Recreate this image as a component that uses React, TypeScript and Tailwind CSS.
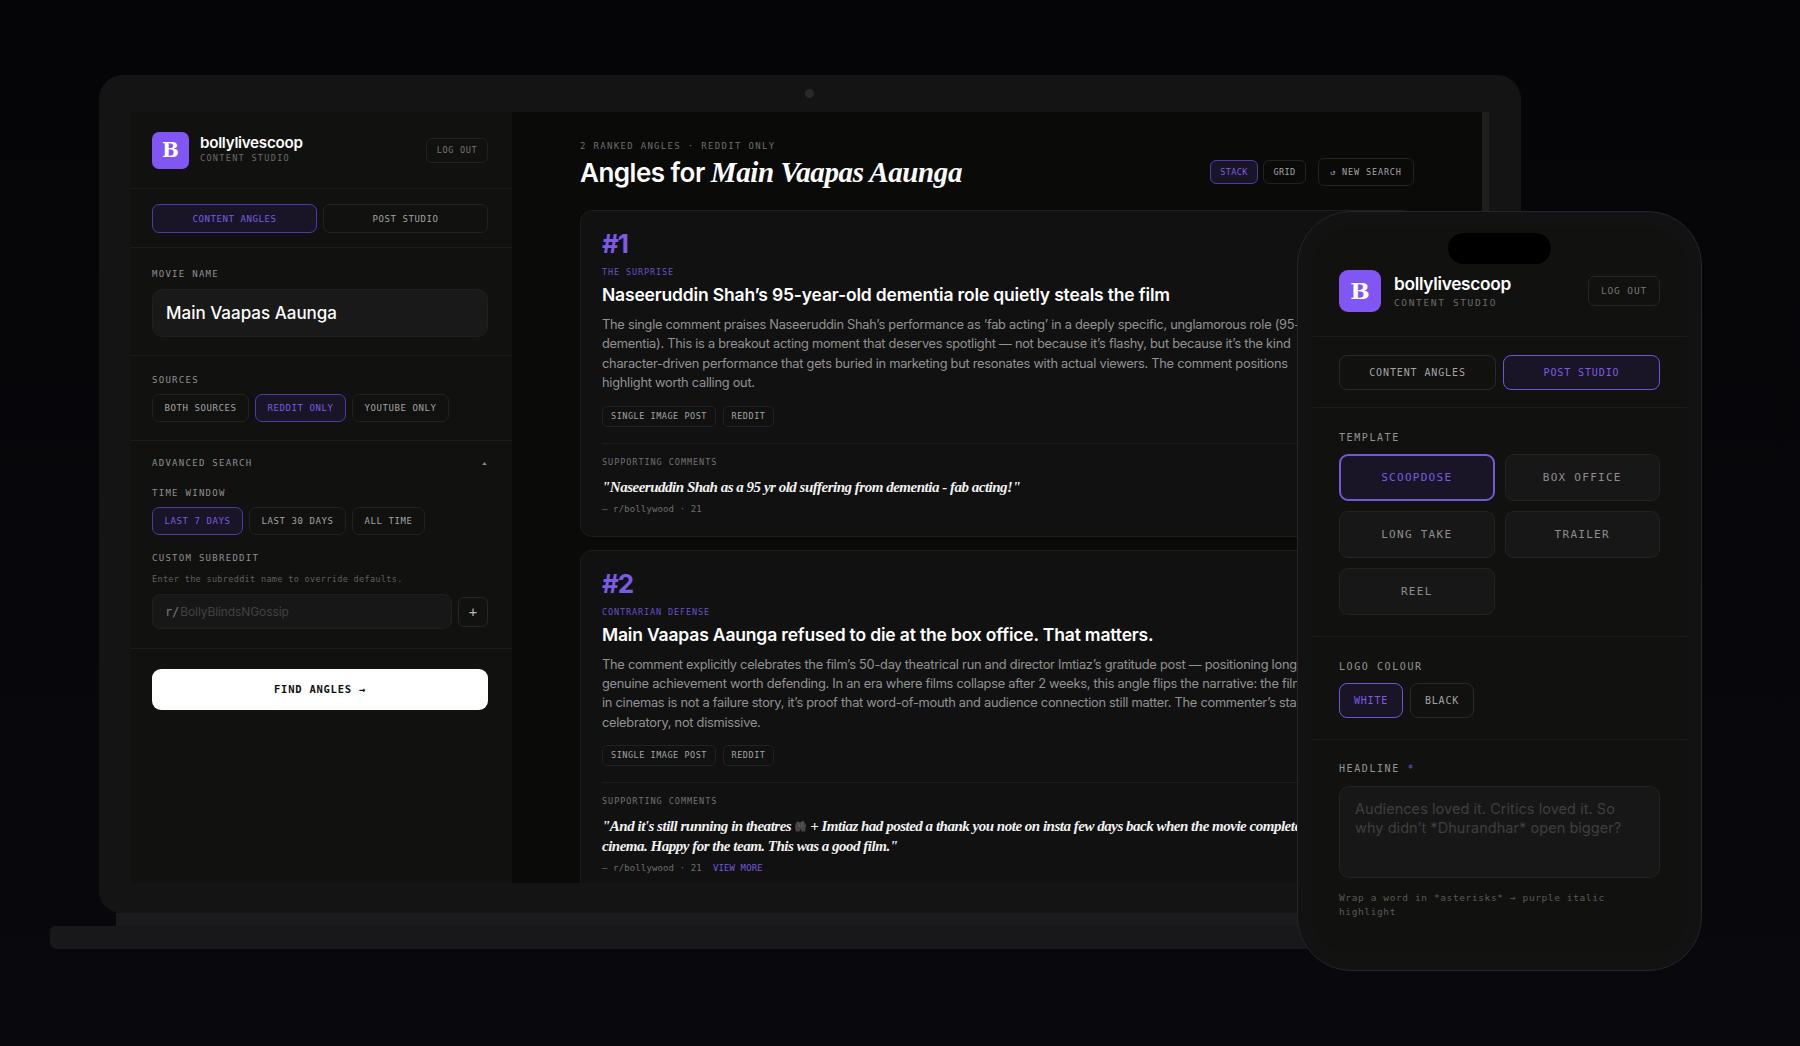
/**
 * App.tsx — bollylivescoop studio mockup: laptop and phone on a dark canvas.
 */
import type { ReactNode } from 'react';

/** Tailwind class atoms */
const mono = "font-['DejaVu_Sans_Mono',monospace]";
const sans = "font-['Inter',sans-serif]";
const serif = "font-['Liberation_Serif',serif]";
const divider = 'border-b border-[#1c1c1c]';
const label = `${mono} h-[12px] text-[9px] leading-[12px] tracking-[1.28px] text-[#8f8f8f]`;
const phoneLabel = `${mono} h-[12px] pt-[1px] text-[10px] leading-[12px] tracking-[1.58px] text-[#949494]`;

/** Small outlined button; `on` gives it the purple selected look. */
function Chip({
  on = false,
  className,
  children,
}: {
  on?: boolean;
  className: string;
  children: ReactNode;
}) {
  return (
    <div
      className={`${mono} flex items-center justify-center whitespace-nowrap border pt-[1px] ${
        on
          ? 'border-[#4c3ba6] bg-[#191426] text-[#7a5ee0]'
          : 'border-[#222222] bg-transparent text-[#a3a3a3]'
      } ${className}`}
    >
      {children}
    </div>
  );
}

const sideChip = 'h-[28px] rounded-[7px] !pt-[2px] text-[9px] tracking-[0.58px]';

function Logo({ className }: { className: string }) {
  return (
    <div
      className={`flex shrink-0 items-center justify-center bg-[#8056f5] font-['DejaVu_Serif',serif] font-bold text-white ${className}`}
    >
      B
    </div>
  );
}

/** The grey folded-hands emoji that sits in the second quote. */
function GreyEmoji() {
  return (
    <svg viewBox="0 0 14 14" className="mx-[3px] inline-block h-[14px] w-[13px] align-[-2px]">
      <path d="M2 13 1 7l2-5 4 1 3-2 3 5-1 7H8L7 10l-1 3z" fill="#454545" />
      <path d="M5 4l1 4M9 3 8 8" stroke="#666666" strokeWidth="1" fill="none" />
    </svg>
  );
}

function Card({
  rank,
  kicker,
  title,
  lines,
  quote,
  more = false,
}: {
  rank: string;
  kicker: string;
  title: string;
  lines: string[];
  quote: ReactNode;
  more?: boolean;
}) {
  return (
    <article className="shrink-0 rounded-[12px] border border-[#1d1d1d] bg-[#111111] px-[21px] pb-[21px] pt-[20px]">
      <div className={`${sans} text-[26px] font-bold leading-[26px] tracking-[-1.2px] text-[#7a5be6]`}>
        {rank}
      </div>
      <div className={`${mono} mt-[9px] text-[8.5px] leading-[12px] tracking-[0.88px] text-[#6a50c8]`}>
        {kicker}
      </div>
      <h2 className={`${sans} mt-[5px] whitespace-nowrap text-[17.5px] font-semibold leading-[24px] tracking-[-0.17px] text-white`}>
        {title}
      </h2>
      <div className={`${sans} mt-[8px] text-[12.8px] leading-[19.4px] tracking-[-0.25px] text-[#929292]`}>
        {lines.map((line) => (
          <p key={line} className="whitespace-nowrap">
            {line}
          </p>
        ))}
      </div>
      <div className="mt-[13px] flex gap-[7px]">
        <Chip className="h-[21px] w-[114px] rounded-[5px] !pt-0 text-[8.5px] tracking-[0.53px]">SINGLE IMAGE POST</Chip>
        <Chip className="h-[21px] w-[51px] rounded-[5px] !pt-0 text-[8.5px] tracking-[0.53px]">REDDIT</Chip>
      </div>
      <div className="mt-[16px] border-t border-[#1c1c1c] pt-[12px]">
        <div className={`${mono} text-[8.5px] leading-[12px] tracking-[0.95px] text-[#727272]`}>SUPPORTING COMMENTS</div>
        <div className={`${serif} mt-[9px] text-[15px] font-bold italic leading-[20px] tracking-[-0.49px] text-[#f1f1f1]`}>
          {quote}
        </div>
        <div className={`${mono} mt-[6px] flex text-[9px] leading-[12px] tracking-[0.13px] text-[#6e6e6e]`}>
          <span>— r/bollywood · 21</span>
          {more && <span className="ml-[11px] text-[#7358d8]">VIEW MORE</span>}
        </div>
      </div>
    </article>
  );
}

function Sidebar() {
  return (
    <aside className="flex w-[382px] shrink-0 flex-col bg-[#111110]">
      <header className={`${divider} flex h-[77px] items-center pl-[22px] pr-[24px]`}>
        <Logo className="h-[37px] w-[37px] rounded-[7px] text-[20px]" />
        <div className="-mt-[2px] ml-[11px] flex-1">
          <div className={`${sans} text-[15.2px] font-semibold leading-[18px] tracking-[-0.28px] text-white`}>bollylivescoop</div>
          <div className={`${mono} text-[8.5px] leading-[12px] tracking-[1.31px] text-[#6c6c6c]`}>CONTENT STUDIO</div>
        </div>
        <Chip className="h-[25px] w-[62px] rounded-[6px] !pt-0 text-[8.5px] tracking-[0.69px] !text-[#767676]">LOG OUT</Chip>
      </header>

      <div className={`${divider} flex gap-[6px] pb-[14px] pl-[22px] pr-[24px] pt-[15px]`}>
        <Chip on className="h-[29px] flex-1 rounded-[7px] !pt-[2px] text-[9px] tracking-[0.58px]">CONTENT ANGLES</Chip>
        <Chip className="h-[29px] flex-1 rounded-[7px] !pt-[2px] text-[9px] tracking-[0.58px]">POST STUDIO</Chip>
      </div>

      <section className={`${divider} pb-[18px] pl-[22px] pr-[24px] pt-[20px]`}>
        <div className={label}>MOVIE NAME</div>
        <div className={`${sans} mt-[9px] flex h-[48px] items-center rounded-[10px] border border-[#1f1f1f] bg-[#191919] pl-[13px] pt-[1px] text-[17px] font-medium tracking-[0px] text-white`}>
          Main Vaapas Aaunga
        </div>
      </section>

      <section className={`${divider} pb-[18px] pl-[22px] pr-[24px] pt-[18px]`}>
        <div className={label}>SOURCES</div>
        <div className="mt-[8px] flex gap-[6px]">
          <Chip className={`${sideChip} w-[97px]`}>BOTH SOURCES</Chip>
          <Chip on className={`${sideChip} w-[91px]`}>REDDIT ONLY</Chip>
          <Chip className={`${sideChip} w-[97px]`}>YOUTUBE ONLY</Chip>
        </div>
      </section>

      <section className={`${divider} pb-[19px] pl-[22px] pr-[24px] pt-[16px]`}>
        <div className="flex items-center justify-between">
          <div className={label}>ADVANCED SEARCH</div>
          <svg viewBox="0 0 6 4" className="mr-[1px] h-[3px] w-[5px]">
            <path d="M3 0 6 4H0z" fill="#8a8a8a" />
          </svg>
        </div>
        <div className={`${label} mt-[18px]`}>TIME WINDOW</div>
        <div className="mt-[8px] flex gap-[6px]">
          <Chip on className={`${sideChip} w-[91px]`}>LAST 7 DAYS</Chip>
          <Chip className={`${sideChip} w-[97px]`}>LAST 30 DAYS</Chip>
          <Chip className={`${sideChip} w-[73px]`}>ALL TIME</Chip>
        </div>
        <div className={`${label} mt-[17px]`}>CUSTOM SUBREDDIT</div>
        <div className={`${mono} mt-[9px] text-[8.5px] leading-[12px] tracking-[0.33px] text-[#606060]`}>
          Enter the subreddit name to override defaults.
        </div>
        <div className="mt-[9px] flex items-center gap-[6px]">
          <div className={`${sans} flex h-[35px] w-[300px] items-center rounded-[8px] border border-[#1f1f1f] bg-[#171717] pl-[12px] text-[12px] tracking-[-0.1px]`}>
            <span className={`${mono} mr-[1px] text-[#7a7a7a]`}>r/</span>
            <span className="text-[#424242]">BollyBlindsNGossip</span>
          </div>
          <Chip className="h-[30px] w-[30px] rounded-[6px] !border-[#262626] text-[14px] !text-[#b5b5b5]">+</Chip>
        </div>
      </section>

      <div className="pl-[22px] pr-[24px] pt-[20px]">
        <div className={`${mono} flex h-[41px] items-center justify-center rounded-[9px] bg-white text-[10.5px] font-bold tracking-[0.75px] text-[#111111]`}>
          FIND ANGLES →
        </div>
      </div>
    </aside>
  );
}

function Results() {
  return (
    <main className="flex min-w-0 flex-1 flex-col overflow-hidden bg-[#0a0a09] px-[68px] pt-[28px]">
      <div className="mb-[20px] flex shrink-0 items-end justify-between">
        <div>
          <div className={`${mono} text-[9px] leading-[12px] tracking-[1.32px] text-[#6e6e6e]`}>
            2 RANKED ANGLES · REDDIT ONLY
          </div>
          <h1 className={`${sans} mt-[3px] whitespace-nowrap text-[26px] font-semibold leading-[34px] tracking-[-0.5px] text-white`}>
            Angles for{' '}
            <em className={`${serif} text-[29px] font-bold italic tracking-[-0.4px]`}>Main Vaapas Aaunga</em>
          </h1>
        </div>
        <div className="mb-[4px] flex items-center">
          <Chip on className="h-[24px] w-[48px] rounded-[6px] text-[8.5px] tracking-[0.35px]">STACK</Chip>
          <Chip className="ml-[5px] h-[24px] w-[43px] rounded-[6px] text-[8.5px] tracking-[0.35px]">GRID</Chip>
          <Chip className="ml-[12px] h-[28px] w-[96px] rounded-[6px] text-[8.5px] tracking-[0.85px]">↺ NEW SEARCH</Chip>
        </div>
      </div>
      <div className="flex flex-col gap-[13px]">
        <Card
          rank="#1"
          kicker="THE SURPRISE"
          title="Naseeruddin Shah’s 95-year-old dementia role quietly steals the film"
          lines={[
            'The single comment praises Naseeruddin Shah’s performance as ‘fab acting’ in a deeply specific, unglamorous role (95-year',
            'dementia). This is a breakout acting moment that deserves spotlight — not because it’s flashy, but because it’s the kind',
            'character-driven performance that gets buried in marketing but resonates with actual viewers. The comment positions',
            'highlight worth calling out.',
          ]}
          quote={<p className="whitespace-nowrap">"Naseeruddin Shah as a 95 yr old suffering from dementia - fab acting!"</p>}
        />
        <Card
          rank="#2"
          kicker="CONTRARIAN DEFENSE"
          title="Main Vaapas Aaunga refused to die at the box office. That matters."
          lines={[
            'The comment explicitly celebrates the film’s 50-day theatrical run and director Imtiaz’s gratitude post — positioning longevity',
            'genuine achievement worth defending. In an era where films collapse after 2 weeks, this angle flips the narrative: the film',
            'in cinemas is not a failure story, it’s proof that word-of-mouth and audience connection still matter. The commenter’s stance',
            'celebratory, not dismissive.',
          ]}
          quote={
            <>
              <p className="whitespace-nowrap">
                "And it's still running in theatres
                <GreyEmoji />+ Imtiaz had posted a thank you note on insta few days back when the movie completed
              </p>
              <p className="whitespace-nowrap">cinema. Happy for the team. This was a good film."</p>
            </>
          }
          more
        />
      </div>
    </main>
  );
}

function Laptop() {
  return (
    <div className="absolute left-[50px] top-[75px] flex w-[1520px] flex-col items-center">
      <div className="w-[1422px] rounded-t-[24px] rounded-b-[22px] bg-[#141415]">
        <div className="flex h-[37px] items-center justify-center pr-[2px]">
          <div className="h-[9px] w-[9px] rounded-full bg-[#29292a]" />
        </div>
        <div className="mb-[30px] ml-[31px] mr-[32px] flex h-[771px] overflow-hidden">
          <Sidebar />
          <Results />
          <div className="w-[7px] shrink-0 bg-[#1f1f1f]" />
        </div>
      </div>
      <div className="h-[13px] w-[1388px] bg-[#1b1b1d]" />
      <div className="h-[23px] w-full rounded-[7px] rounded-t-[5px] bg-[#18181a]" />
    </div>
  );
}

function Phone() {
  const tile = 'h-[47px] rounded-[9px] !pt-[2px] text-[11px] tracking-[1.28px]';
  const soft = '!border-[#232323] bg-[#171717]! !text-[#8e8e8e]';
  return (
    <div className="absolute left-[1297px] top-[211px] h-[760px] w-[405px] rounded-[54px] border border-[#26262a] bg-[#121213] p-[15px]">
      <div className="relative h-[726px] w-[374px] overflow-hidden rounded-[40px] bg-[#111110]">
        <div className="absolute left-[135px] top-[6px] h-[31px] w-[103px] rounded-full bg-black" />
        <header className={`${divider} flex items-center pb-[24px] pl-[26px] pr-[27px] pt-[43px]`}>
          <Logo className="h-[42px] w-[42px] rounded-[9px] text-[23px]" />
          <div className="ml-[13px] flex-1">
            <div className={`${sans} text-[17.3px] font-semibold leading-[20px] tracking-[-0.3px] text-white`}>bollylivescoop</div>
            <div className={`${mono} mt-[3px] text-[9.5px] leading-[12px] tracking-[1.64px] text-[#6c6c6c]`}>CONTENT STUDIO</div>
          </div>
          <Chip className="h-[30px] w-[72px] rounded-[7px] !border-[#262626] text-[9.5px] tracking-[0.88px] !text-[#767676]">LOG OUT</Chip>
        </header>

        <div className={`${divider} flex gap-[7px] pb-[17px] pl-[26px] pr-[27px] pt-[18px]`}>
          <Chip className="h-[35px] flex-1 rounded-[8px] !border-[#292929] !pt-0 text-[10px] tracking-[0.88px]">CONTENT ANGLES</Chip>
          <Chip on className="h-[35px] flex-1 rounded-[8px] !border-[#6f55d6] !pt-0 text-[10px] tracking-[0.88px]">POST STUDIO</Chip>
        </div>

        <section className={`${divider} pb-[21px] pl-[26px] pr-[27px] pt-[23px]`}>
          <div className={phoneLabel}>TEMPLATE</div>
          <div className="mt-[11px] grid grid-cols-2 gap-x-[10px] gap-y-[10px]">
            <Chip on className={`${tile} border-2 !border-[#7358d8]`}>SCOOPDOSE</Chip>
            <Chip className={`${tile} ${soft}`}>BOX OFFICE</Chip>
            <Chip className={`${tile} ${soft}`}>LONG TAKE</Chip>
            <Chip className={`${tile} ${soft}`}>TRAILER</Chip>
            <Chip className={`${tile} ${soft}`}>REEL</Chip>
          </div>
        </section>

        <section className={`${divider} pb-[21px] pl-[26px] pr-[27px] pt-[23px]`}>
          <div className={phoneLabel}>LOGO COLOUR</div>
          <div className="mt-[11px] flex gap-[7px]">
            <Chip on className="h-[35px] w-[64px] rounded-[8px] !border-[#6f55d6] !pt-0 text-[10px] tracking-[0.78px]">WHITE</Chip>
            <Chip className="h-[35px] w-[64px] rounded-[8px] !border-[#292929] !pt-0 text-[10px] tracking-[0.78px]">BLACK</Chip>
          </div>
        </section>

        <section className="pl-[26px] pr-[27px] pt-[22px]">
          <div className={phoneLabel}>
            HEADLINE <span className="text-[#6f55d6]">*</span>
          </div>
          <div className={`${sans} mt-[12px] h-[92px] rounded-[10px] border border-[#232323] bg-[#171717] pl-[15px] pt-[12px] text-[14.5px] leading-[19px] tracking-[0.05px] text-[#3f3f3f]`}>
            <p>Audiences loved it. Critics loved it. So</p>
            <p>why didn’t *Dhurandhar* open bigger?</p>
          </div>
          <p className={`${mono} mt-[13px] text-[9.5px] leading-[13.5px] tracking-[0.61px] text-[#5a5a5a]`}>
            Wrap a word in *asterisks* → purple italic highlight
          </p>
        </section>
      </div>
    </div>
  );
}

export default function App() {
  return (
    <div className="relative h-[1046px] w-[1800px] overflow-hidden bg-linear-to-b from-[#050508] to-[#09090d]">
      <Laptop />
      <Phone />
    </div>
  );
}
